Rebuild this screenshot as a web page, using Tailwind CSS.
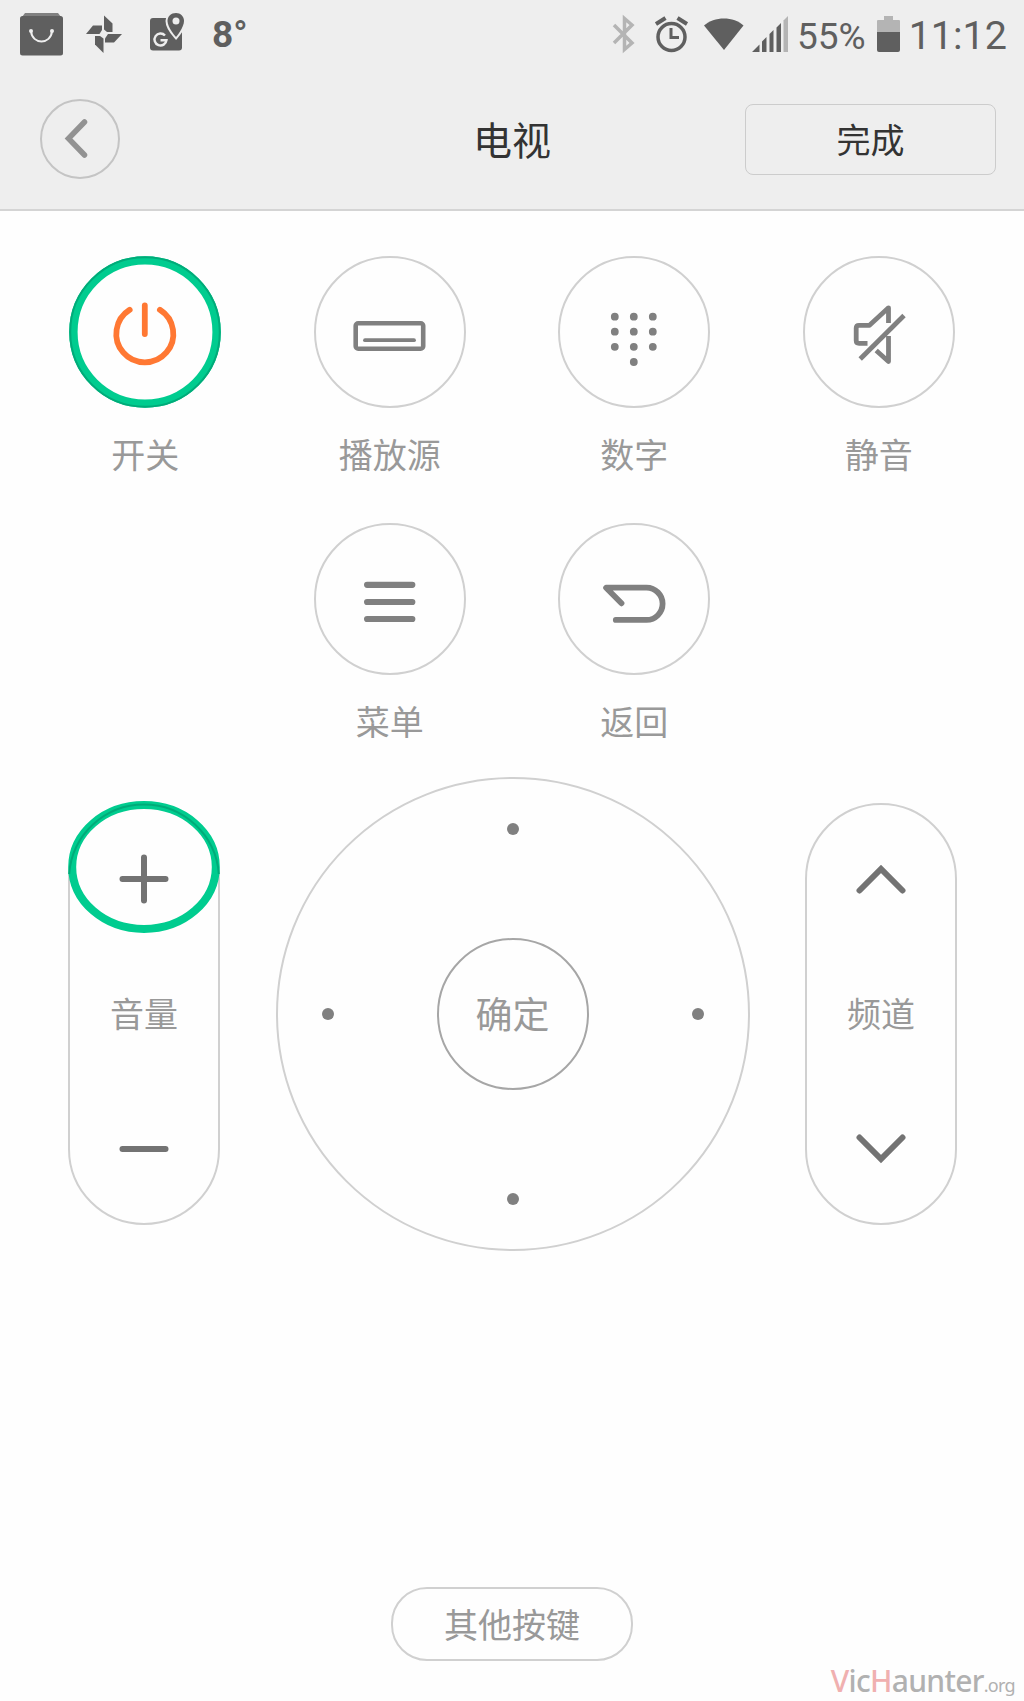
<!DOCTYPE html>
<html lang="zh-CN">
<head>
    <meta charset="UTF-8">
    <meta name="viewport" content="width=device-width, initial-scale=1.0">
    <title>电视</title>
    <script src="https://cdn.jsdelivr.net/npm/@tailwindcss/browser@4"></script>
</head>

<body class="relative w-[1024px] h-[1701px] overflow-hidden bg-[#fefefe] font-['Noto_Sans_CJK_SC',sans-serif] text-[#999]">

    <!-- Status bar -->
    <div class="flex items-center h-[70px] pl-5 pr-[17px] bg-[#eee] text-[#5f5f5f]">
        <svg class="w-[43px] h-[70px]" viewBox="0 0 43 70">
            <path d="M5 13h33l3 4H2z" fill="#808080"/>
            <rect y="16" width="43" height="39.500" rx="2.500" fill="#5f5f5f"/>
            <path d="M11 31c1 14 20 14 21 0" fill="none" stroke="#eee" stroke-width="2"/>
            <circle cx="11" cy="31" r="2" fill="#eee"/>
            <circle cx="32" cy="31" r="2" fill="#eee"/>
        </svg>
        <svg class="w-[38px] h-[70px] ml-[22px]" viewBox="0 0 38 70" fill="#5f5f5f">
            <path d="M19 15.500 27.500 23.500V32h-5.500l-3-2.500z"/>
            <path d="M37 34 29 42.500H20V38.500l3-4.500z"/>
            <path d="M18.500 53 10 44.500V36h5l3.500 2.500z"/>
            <path d="M1 34 8 25.500h9V30l-2.500 4z"/>
        </svg>
        <svg class="w-[36px] h-[70px] ml-[26px]" viewBox="0 0 36 70">
            <rect x="1" y="18" width="32" height="32.500" rx="3" fill="#5f5f5f"/>
            <path d="M27 13c-5 0-8.500 3.500-8.500 8 0 6.500 8.500 16 8.500 16s8-9.500 8-16c0-4.500-3.500-8-8-8z" fill="#5f5f5f" stroke="#eee" stroke-width="4"/>
            <path d="M27 13c-5 0-8.500 3.500-8.500 8 0 6.500 8.500 16 8.500 16s8-9.500 8-16c0-4.500-3.500-8-8-8z" fill="#5f5f5f"/>
            <circle cx="27" cy="21" r="3.500" fill="#eee"/>
            <path d="M16 35.500a6 6 0 1 0 1.500 4.700H11.500" fill="none" stroke="#eee" stroke-width="2.400"/>
        </svg>
        <span class="ml-[27px] pb-0.5 font-[Roboto,sans-serif] font-bold text-[37px] leading-none">8°</span>

        <div class="flex items-center ml-auto">
            <svg class="w-[24px] h-[70px]" viewBox="0 0 24 70" fill="none" stroke="#b4b4b4" stroke-width="3.500">
                <path d="M2 25 20 43 12.500 49.500V18.500L20 25 2 43"/>
            </svg>
            <svg class="w-[34px] h-[70px] ml-[19px]" viewBox="0 0 34 70" fill="none" stroke="#5f5f5f">
                <circle cx="16.500" cy="37" r="13.500" stroke-width="3.500"/>
                <path d="M1 24 10.500 18M32 24 22.500 18" stroke-width="4"/>
                <path d="M16 28v9.500h8" stroke-width="3"/>
            </svg>
            <svg class="w-[40px] h-[70px] ml-[15px]" viewBox="0 0 40 70" fill="#5f5f5f">
                <path d="M0 25.500C10 16 30 16 39.500 25.500L20 50z"/>
            </svg>
            <svg class="w-[38px] h-[70px] ml-2" viewBox="0 0 38 70" fill="#5f5f5f">
                <path d="M0 52 7.500 44.500V52zM10 41.500 14.500 37V52H10zM17.500 34 21.500 30V52H17.500zM24.500 27.500 29 23V52H24.500z"/>
                <path d="M31.500 20.500 36 16V52H31.500z" fill="#b4b4b4"/>
            </svg>
            <span class="ml-[7px] pt-0.5 font-[Roboto,sans-serif] text-[37px] leading-none">55%</span>
            <svg class="w-[23px] h-[70px] ml-[11px]" viewBox="0 0 23 70">
                <path d="M1 20h6v-4h9v4h6q1 0 1 1v12H0V21q0-1 1-1z" fill="#b4b4b4"/>
                <path d="M0 32h23v18q0 2-2 2H2q-2 0-2-2z" fill="#5f5f5f"/>
            </svg>
            <span class="ml-[9px] pt-0.5 font-[Roboto,sans-serif] text-[39.5px] leading-none">11:12</span>
        </div>
    </div>

    <!-- Header -->
    <div class="grid grid-cols-[1fr_auto_1fr] items-center h-[141px] px-[28px] bg-[#eee] border-b-2 border-[#d4d4d4] text-[#333]">
        <button class="size-[80px] ml-3 -mt-px rounded-full border-2 border-[#c4c4c4]">
            <svg class="size-[76px]" viewBox="0 0 76 76" fill="none" stroke="#929292" stroke-width="5.500" stroke-linecap="round">
                <path d="M42.500 21 26.500 37.500 42.500 54"/>
            </svg>
        </button>
        <h1 class="pb-0.5 text-[39px] leading-none">电视</h1>
        <button class="justify-self-end w-[251px] h-[71px] -mt-px rounded-lg border border-[#ccc] text-[34px] leading-none">完成</button>
    </div>

    <!-- Function buttons -->
    <div class="grid grid-cols-4 gap-y-8 w-[978px] ml-[23px] mt-[45px] text-[34px] leading-[51px]">
        <div class="flex flex-col items-center gap-[20px] h-[235px]">
            <button class="size-[152px]">
                <svg class="size-[152px]" viewBox="0 0 152 152" fill="none">
                    <circle cx="76" cy="76" r="71.600" stroke="#00cc8f" stroke-width="8.400"/>
                    <circle cx="76" cy="76" r="74.800" stroke="#00ab79" stroke-width="2"/>
                    <path d="M75.800 49.300V78M60.700 53.700a28.500 28.500 0 1 0 30.200 0" stroke="#ff7833" stroke-width="5.800" stroke-linecap="round"/>
                </svg>
            </button>
            <span>开关</span>
        </div>
        <div class="flex flex-col items-center gap-[20px] h-[235px]">
            <button class="size-[152px] rounded-full border-2 border-[#d0d0d0]">
                <svg class="size-[152px] -m-0.5" viewBox="0 0 152 152" fill="none" stroke="#808080" stroke-linecap="round">
                    <rect x="41.700" y="67.300" width="67.500" height="25.400" rx="2.500" stroke-width="4.600"/>
                    <path d="M51 84.200h49" stroke-width="3.800"/>
                </svg>
            </button>
            <span>播放源</span>
        </div>
        <div class="flex flex-col items-center gap-[20px] h-[235px]">
            <button class="size-[152px] rounded-full border-2 border-[#d0d0d0]">
                <svg class="size-[152px] -m-0.5" viewBox="0 0 152 152" stroke="#808080" stroke-width="7.800" stroke-linecap="round">
                    <path d="M56.800 60.700h0M75.800 60.700h0M94.800 60.700h0M56.800 75.700h0M75.800 75.700h0M94.800 75.700h0M56.800 90.800h0M75.800 90.800h0M94.800 90.800h0M75.800 106h0"/>
                </svg>
            </button>
            <span>数字</span>
        </div>
        <div class="flex flex-col items-center gap-[20px] h-[235px]">
            <button class="size-[152px] rounded-full border-2 border-[#d0d0d0]">
                <svg class="size-[152px] -m-0.5" viewBox="0 0 152 152" fill="none" stroke="#808080" stroke-width="4.800" stroke-linejoin="round">
                    <path d="M85.500 67V51.800L66.500 69.300H56q-2.800 0-2.800 2.800V84.500q0 2.800 2.800 2.800H64.500M85.500 80v25.500L73.200 94.500"/>
                    <path d="M101 59.500 57.200 103"/>
                </svg>
            </button>
            <span>静音</span>
        </div>
        <div class="col-start-2 flex flex-col items-center gap-[20px] h-[223px]">
            <button class="size-[152px] rounded-full border-2 border-[#d0d0d0]">
                <svg class="size-[152px] -m-0.5" viewBox="0 0 152 152" stroke="#808080" stroke-width="6.200" stroke-linecap="round">
                    <path d="M53.100 61.800h45.200M53.100 79h45.200M53.100 96h45.200"/>
                </svg>
            </button>
            <span>菜单</span>
        </div>
        <div class="flex flex-col items-center gap-[20px] h-[223px]">
            <button class="size-[152px] rounded-full border-2 border-[#d0d0d0]">
                <svg class="size-[152px] -m-0.5" viewBox="0 0 152 152" fill="none" stroke="#808080" stroke-width="5.800" stroke-linecap="round" stroke-linejoin="round">
                    <path d="M63.500 80.300 48.100 64.700H88.500a16.100 16.100 0 0 1 0 32.200H57.800"/>
                </svg>
            </button>
            <span>返回</span>
        </div>
    </div>

    <!-- Volume, direction pad, channel -->
    <div class="flex items-center justify-between h-[474px] mt-[31px] pl-[68px] pr-[67px] text-[34px] leading-none">
        <div class="relative flex flex-col items-center justify-between w-[152px] h-[422px] rounded-full border-2 border-[#d0d0d0] py-[49px]">
            <svg class="size-[50px]" viewBox="0 0 50 50" stroke="#737373" stroke-width="6" stroke-linecap="round">
                <path d="M25 3.500v43M3.500 25h43"/>
            </svg>
            <span class="pb-0.5">音量</span>
            <svg class="size-[50px]" viewBox="0 0 50 50" stroke="#737373" stroke-width="6" stroke-linecap="round">
                <path d="M3.500 25h43"/>
            </svg>
            <!-- Highlight over the plus key -->
            <svg class="absolute -left-0.5 -top-[4px] w-[152px] h-[133px]" viewBox="0 0 152 133" fill="none">
                <ellipse cx="76" cy="66" rx="71.800" ry="62" stroke="#00cc8f" stroke-width="8"/>
                <path d="M1.200 73a75 75 0 0 1 149.600 0" stroke="#00ab79" stroke-width="2"/>
            </svg>
        </div>

        <div class="flex flex-col items-center justify-between size-[474px] rounded-full border-2 border-[#d0d0d0] p-[44px]">
            <i class="size-3 rounded-full bg-[#808080]"></i>
            <div class="flex items-center justify-between w-full">
                <i class="size-3 rounded-full bg-[#808080]"></i>
                <button class="size-[152px] pb-0.5 rounded-full border-2 border-[#a6a6a6] text-[37px] leading-none">确定</button>
                <i class="size-3 rounded-full bg-[#808080]"></i>
            </div>
            <i class="size-3 rounded-full bg-[#808080]"></i>
        </div>

        <div class="flex flex-col items-center justify-between w-[152px] h-[422px] rounded-full border-2 border-[#d0d0d0] py-[49px]">
            <svg class="size-[50px]" viewBox="0 0 50 50" fill="none" stroke="#737373" stroke-width="6" stroke-linecap="round">
                <path d="M3.500 36.500 25 15 46.500 36.500"/>
            </svg>
            <span class="pb-0.5">频道</span>
            <svg class="size-[50px]" viewBox="0 0 50 50" fill="none" stroke="#737373" stroke-width="6" stroke-linecap="round">
                <path d="M3.500 13.500 25 35 46.500 13.500"/>
            </svg>
        </div>
    </div>

    <!-- Other keys -->
    <div class="flex justify-center mt-[336px]">
        <button class="w-[242px] h-[74px] rounded-[36px] border-2 border-[#d0d0d0] text-[34px] leading-none">其他按键</button>
    </div>

    <!-- Watermark -->
    <div class="absolute right-[9px] -bottom-1 flex items-baseline font-['Noto_Sans',sans-serif] text-[30px] leading-[40px] tracking-[-0.7px] font-medium text-[#b1b1b1]">
        <span><b class="font-medium text-[#f0b0b0]">V</b>ic<b class="font-medium text-[#f0b0b0]">H</b>aunter</span><span class="text-[18px] font-normal">.org</span>
    </div>

</body>
</html>
